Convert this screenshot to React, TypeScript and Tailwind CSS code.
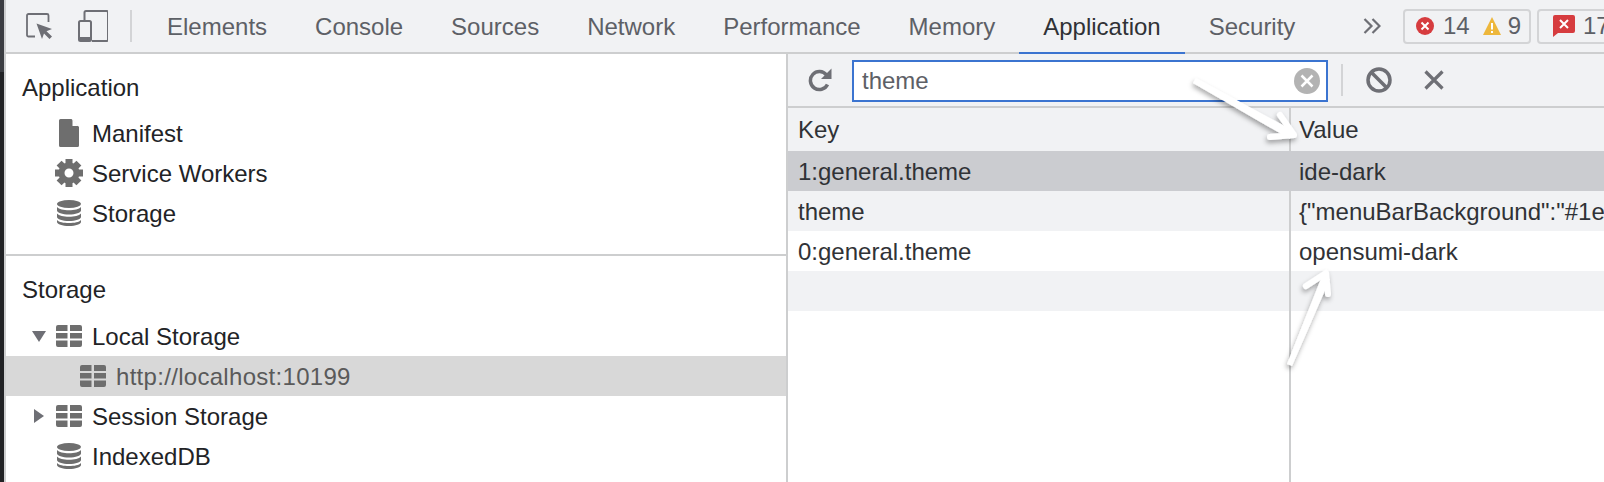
import { ReactNode } from "react";

function FileIcon() {
  return (
    <svg width="20" height="28" viewBox="0 0 20 28">
      <path d="M1.500 0H12.500L20 8V26.500A1.500 1.500 0 0 1 18.500 28H1.500A1.500 1.500 0 0 1 0 26.500V1.500A1.500 1.500 0 0 1 1.500 0z" fill="#6e6e6e" />
      <path d="M13.500 0.500L19.500 7H13.500z" fill="#fff" />
    </svg>
  );
}

function GearIcon() {
  const teeth = [0, 45, 90, 135, 180, 225, 270, 315];
  return (
    <svg width="28" height="28" viewBox="0 0 28 28">
      {teeth.map((a) => (
        <rect key={a} x="10.500" y="0" width="7" height="6" fill="#6e6e6e" transform={`rotate(${a} 14 14)`} />
      ))}
      <circle cx="14" cy="14" r="7.500" fill="none" stroke="#6e6e6e" strokeWidth="6" />
    </svg>
  );
}

function DbIcon() {
  return (
    <svg width="24" height="26" viewBox="0 0 24 26">
      <ellipse cx="12" cy="4" rx="12" ry="4" fill="#6e6e6e" />
      <path d="M0 7c2 2.300 6.500 3.200 12 3.200S22 9.300 24 7v3.500c0 2.200-5.400 4-12 4s-12-1.800-12-4z" fill="#6e6e6e" />
      <path d="M0 14c2 2.300 6.500 3.200 12 3.200S22 16.300 24 14v3.500c0 2.200-5.400 4-12 4s-12-1.800-12-4z" fill="#6e6e6e" transform="translate(0 -0.500)" />
      <path d="M0 20c2 2.300 6.500 3 12 3s10-.7 12-3v2c0 2.200-5.400 4-12 4s-12-1.800-12-4z" fill="#6e6e6e" />
    </svg>
  );
}

function TableIcon() {
  return (
    <svg width="26" height="22" viewBox="0 0 26 22">
      <path d="M2 0h9.500v6H0V2a2 2 0 0 1 2-2zM14 0h10a2 2 0 0 1 2 2v4H14zM0 8h11.500v5.500H0zM14 8h12v5.500H14zM0 15.500h11.500V22H2a2 2 0 0 1-2-2zM14 15.500h12V20a2 2 0 0 1-2 2H14z" fill="#6e6e6e" />
    </svg>
  );
}

function Arrowhead({ open }: { open?: boolean }) {
  return open ? (
    <svg width="14" height="11" viewBox="0 0 14 11"><path d="M0 0h14L7 11z" fill="#6e6f75" /></svg>
  ) : (
    <svg width="10" height="14" viewBox="0 0 10 14"><path d="M0 0l10 7-10 7z" fill="#6e6f75" /></svg>
  );
}

function TreeRow({
  icon,
  label,
  arrow,
  indent = "pl-[46px]",
  selected,
}: {
  icon: ReactNode;
  label: string;
  arrow?: ReactNode;
  indent?: string;
  selected?: boolean;
}) {
  return (
    <div className={`relative flex h-10 items-center ${indent} ${selected ? "bg-[#d8d8d8] text-[#5a5a5a]" : "text-[#222326]"}`}>
      {arrow && <span className="absolute left-[25px] flex h-10 w-[16px] items-center justify-center">{arrow}</span>}
      <span className="flex w-[34px] shrink-0 items-center justify-center">{icon}</span>
      <span className={`ml-[6px] pt-[2px] ${selected ? "tracking-[0.3px]" : ""}`}>{label}</span>
    </div>
  );
}

const tabs = ["Elements", "Console", "Sources", "Network", "Performance", "Memory", "Application", "Security"];

const rows = [
  { k: "1:general.theme", v: "ide-dark", bg: "bg-[#cbccd0]", line: "border-transparent" },
  { k: "theme", v: '{"menuBarBackground":"#1e', bg: "bg-[#f1f2f4]", line: "border-[#cdcecf]" },
  { k: "0:general.theme", v: "opensumi-dark", bg: "bg-white", line: "border-[#cdcecf]" },
  { k: "", v: "", bg: "bg-[#f1f2f4]", line: "border-[#cdcecf]" },
];

export default function App() {
  return (
    <div className="relative flex h-[482px] w-[1604px] overflow-hidden bg-white text-[24px] [font-family:'Liberation_Sans',Arial,sans-serif]">
      <div className="flex w-1 shrink-0 flex-col bg-[#212225]">
        <div className="h-[72px] bg-[#3b3d42]" />
      </div>
      <div className="flex min-w-0 flex-1 flex-col border-l-2 border-[#cdcecf]">
        {/* top tab bar */}
        <div className="flex h-[54px] shrink-0 items-center border-b-2 border-[#cdcecf] bg-[#f1f2f4] text-[#5d6066]">
          <svg className="ml-[20px] shrink-0" width="26" height="26" viewBox="0 0 26 26" fill="none">
            <path d="M9 23.500H2.500A1.500 1.500 0 0 1 1 22V2.500A1.500 1.500 0 0 1 2.500 1H21A1.500 1.500 0 0 1 22.500 2.500V9" stroke="#6e6f75" strokeWidth="1.800" />
            <path d="M10.500 10.500L26 16l-5.500 2.300L26 23.500 23.500 26l-5.500-5.500-2 5.500z" fill="#6e6f75" />
          </svg>
          <svg className="ml-[26px] shrink-0" width="30" height="32" viewBox="0 0 30 32" fill="none">
            <path d="M6.500 10V2.500A1.500 1.500 0 0 1 8 1h20.500A1.500 1.500 0 0 1 30 2.500v27a1.500 1.500 0 0 1-1.500 1.500H14" stroke="#6e6f75" strokeWidth="2" />
            <rect x="1" y="11" width="12" height="20" rx="1.500" stroke="#6e6f75" strokeWidth="2" />
            <path d="M1 27h12v4H1z" fill="#6e6f75" />
          </svg>
          <div className="ml-[22px] h-8 w-0.5 shrink-0 bg-[#d3d4d6]" />
          <div className="ml-[11px] flex h-full w-[1220px] shrink-0 items-stretch">
            {tabs.map((t) => (
              <div
                key={t}
                className={`flex items-center px-6 pt-[2px] ${t === "Application" ? "-mb-0.5 border-b-2 border-[#3b74d0] text-[#303236]" : ""}`}
              >
                {t}
              </div>
            ))}
          </div>
          <svg className="shrink-0" width="18" height="16" viewBox="0 0 18 16" fill="none">
            <path d="M1.500 1l7 7-7 7M9.500 1l7 7-7 7" stroke="#6e6f75" strokeWidth="2.200" />
          </svg>
          <div className="ml-[22px] flex h-[35px] w-[128px] shrink-0 items-center rounded border-2 border-[#d3d4d6] pl-[11px]">
            <span className="flex h-[18px] w-[18px] shrink-0 items-center justify-center rounded-full bg-[#d63c3f]">
              <svg width="10" height="10" viewBox="0 0 10 10"><path d="M1.500 1.500l7 7M8.500 1.500l-7 7" stroke="#fff" strokeWidth="2" /></svg>
            </span>
            <span className="ml-[9px]">14</span>
            <svg className="ml-[13px] shrink-0" width="18" height="18" viewBox="0 0 18 18">
              <path d="M9 0L18 18H0z" fill="#edb73c" />
              <path d="M8 6h2v6.500H8zM8 14h2v2H8z" fill="#fff" />
            </svg>
            <span className="ml-[7px]">9</span>
          </div>
          <div className="ml-[6px] flex h-[35px] w-[120px] shrink-0 items-center rounded border-2 border-[#d3d4d6] pl-[14px]">
            <svg className="shrink-0" width="22" height="22" viewBox="0 0 22 22">
              <path d="M2 0h18a2 2 0 0 1 2 2v14a2 2 0 0 1-2 2H5l-5 4V2a2 2 0 0 1 2-2z" fill="#d63c3f" />
              <path d="M7 5l8 8M15 5l-8 8" stroke="#fff" strokeWidth="2" />
            </svg>
            <span className="ml-2">17</span>
          </div>
        </div>

        <div className="flex min-h-0 flex-1">
          {/* sidebar */}
          <div className="w-[782px] shrink-0 border-r-2 border-[#cdcecf]">
            <div className="h-[202px] border-b-2 border-[#cdcecf]">
              <div className="pl-[16px] pt-[21px] leading-[26px] text-[#222326]">Application</div>
              <div className="mt-[12px]">
                <TreeRow icon={<FileIcon />} label="Manifest" />
                <TreeRow icon={<GearIcon />} label="Service Workers" />
                <TreeRow icon={<DbIcon />} label="Storage" />
              </div>
            </div>
            <div className="pl-[16px] pt-[21px] leading-[26px] text-[#222326]">Storage</div>
            <div className="mt-[13px]">
              <TreeRow icon={<TableIcon />} label="Local Storage" arrow={<Arrowhead open />} />
              <TreeRow icon={<TableIcon />} label="http://localhost:10199" indent="pl-[70px]" selected />
              <TreeRow icon={<TableIcon />} label="Session Storage" arrow={<Arrowhead />} />
              <TreeRow icon={<DbIcon />} label="IndexedDB" />
            </div>
          </div>

          {/* storage table */}
          <div className="flex min-w-0 flex-1 flex-col">
            <div className="flex h-[54px] shrink-0 items-center border-b-2 border-[#cdcecf] bg-[#f1f2f4]">
              <svg className="ml-[20px] shrink-0" width="24" height="24" viewBox="0 0 24 24" fill="none">
                <path d="M19.500 16.500a9 9 0 1 1-1-9.500" stroke="#6e6f75" strokeWidth="3.500" />
                <path d="M23.500 0.500v10.500H13z" fill="#6e6f75" />
              </svg>
              <div className="ml-[20px] mt-[2px] flex h-[42px] w-[476px] shrink-0 items-center border-2 border-[#3b74d0] bg-white pl-[8px] pr-[6px] text-[#5d6066]">
                <span className="flex-1">theme</span>
                <svg width="26" height="26" viewBox="0 0 26 26">
                  <circle cx="13" cy="13" r="13" fill="#b3b3b3" />
                  <path d="M7.500 7.500l11 11M18.500 7.500l-11 11" stroke="#fff" strokeWidth="2.500" />
                </svg>
              </div>
              <div className="ml-[13px] h-8 w-0.5 shrink-0 bg-[#d3d4d6]" />
              <svg className="ml-[23px] shrink-0" width="26" height="26" viewBox="0 0 26 26" fill="none">
                <circle cx="13" cy="13" r="11" stroke="#6e6f75" strokeWidth="3.500" />
                <path d="M5.500 5.500l15 15" stroke="#6e6f75" strokeWidth="3.500" />
              </svg>
              <svg className="ml-[32px] shrink-0" width="20" height="20" viewBox="0 0 20 20" fill="none">
                <path d="M1.500 1.500l17 17M18.500 1.500l-17 17" stroke="#6e6f75" strokeWidth="3.200" />
              </svg>
            </div>
            <div className="flex h-[43px] shrink-0 items-center bg-[#f1f2f4] text-[#303236]">
              <div className="flex h-full w-[503px] shrink-0 items-center border-r-2 border-[#cdcecf] pl-[10px]">Key</div>
              <div className="pl-[8px]">Value</div>
            </div>
            {rows.map((r) => (
              <div key={r.k || "empty"} className={`flex h-10 shrink-0 items-center text-[#303236] ${r.bg}`}>
                <div className={`flex h-full w-[503px] shrink-0 items-center border-r-2 pl-[10px] pt-[2px] ${r.line}`}>{r.k}</div>
                <div className="overflow-hidden whitespace-nowrap pl-[8px] pt-[2px]">{r.v}</div>
              </div>
            ))}
            <div className="flex flex-1">
              <div className="w-[503px] shrink-0 border-r-2 border-[#cdcecf]" />
            </div>
          </div>
        </div>
      </div>

      {/* white annotation arrows drawn over the screenshot */}
      <svg className="pointer-events-none absolute left-0 top-0" width="1604" height="482" viewBox="0 0 1604 482" fill="none">
        <defs>
          <filter id="arrow-shadow" x="-30%" y="-30%" width="160%" height="160%">
            <feDropShadow dx="-1" dy="3" stdDeviation="2.500" floodColor="#000" floodOpacity="0.35" />
          </filter>
        </defs>
        <g filter="url(#arrow-shadow)">
          <path d="M1196 78L1294 131L1290 139L1193 83z" fill="#fff" />
          <path d="M1270 137L1294 135L1280 115" stroke="#fff" strokeWidth="6" strokeLinecap="round" strokeLinejoin="round" />
          <path d="M1287 364L1322 276L1330 279L1292 366z" fill="#fff" />
          <path d="M1306 286L1326 273L1328 294" stroke="#fff" strokeWidth="6" strokeLinecap="round" strokeLinejoin="round" />
        </g>
      </svg>
    </div>
  );
}
